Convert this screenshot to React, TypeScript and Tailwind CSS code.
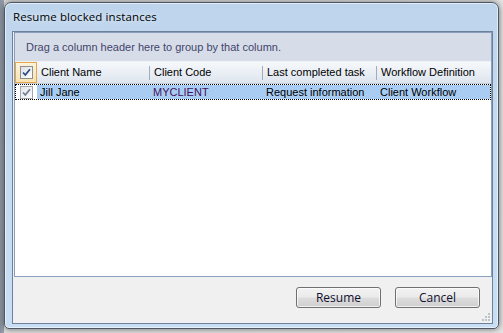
import React from "react";

const ui = { fontFamily: '"Open Sans", "Noto Sans", sans-serif' };
const grid = { fontFamily: '"Liberation Sans", Arial, sans-serif' };

const CheckBox = ({ disabled }: { disabled?: boolean }) => (
  <div
    className={
      "w-[13px] h-[13px] border flex items-center justify-center " +
      (disabled
        ? "border-[#a4a9b0] bg-[linear-gradient(135deg,#e2e4e8,#fbfbfc)]"
        : "border-[#8e8f8f] bg-[linear-gradient(135deg,#dcdfe3,#ffffff)]")
    }
  >
    <svg width="9" height="9" viewBox="0 0 9 9">
      <path
        d="M1 4.5 L3.3 7 L8 1.2"
        fill="none"
        stroke={disabled ? "#6f7d92" : "#2c4a86"}
        strokeWidth="1.7"
      />
    </svg>
  </div>
);

// column widths measured from the screenshot (separator included at the start)
const colW = ["w-[112px]", "w-[113px]", "w-[114px]", "flex-1"];
const columns = ["Client Name", "Client Code", "Last completed task", "Workflow Definition"];
const row = ["Jill Jane", "MYCLIENT", "Request information", "Client Workflow"];

const Button = ({ label }: { label: string }) => (
  <button
    style={ui}
    className="w-[85px] h-[21px] rounded-[3px] border border-[#707070] bg-[linear-gradient(180deg,#f2f2f2_0%,#ebebeb_48%,#dddddd_52%,#cfcfcf_100%)] shadow-[inset_0_0_0_1px_rgba(255,255,255,0.7)] text-[12px] text-[#101030] leading-none"
  >
    {label}
  </button>
);

export default function App() {
  return (
    <div className="w-[503px] h-[333px] overflow-hidden bg-[linear-gradient(90deg,#8993a0_0px,#9aa3ad_4px,#dedede_4px,#e4e4e4_100%)]">
      {/* dialog window */}
      <div className="ml-[4px] mt-[2px] w-[495px] h-[327px] flex flex-col rounded-t-[7px] rounded-b-[5px] border border-[#4e5864] bg-[linear-gradient(180deg,#bdd4ec_0%,#c5dbf2_40%,#c8def4_100%)] shadow-[0_0_6px_rgba(0,0,0,0.55),inset_0_0_0_1px_rgba(255,255,255,0.55)]">
        <div className="h-[28px] pl-[8px] flex items-center">
          <span style={ui} className="text-[11.5px] text-black tracking-[0.1px] [text-shadow:0_0_6px_rgba(255,255,255,0.9)]">
            Resume blocked instances
          </span>
        </div>

        {/* client area */}
        <div className="ml-[7px] mr-[5px] mb-[4px] flex-1 flex flex-col border border-[#6d819b] bg-[#f0f0f0]">
          {/* grid */}
          <div style={grid} className="ml-[1px] h-[245px] flex flex-col border border-[#8aa0bd] bg-white">
            <div className="h-[29px] flex items-center pl-[11px] bg-[#d6dde9] border-b border-[#eef2f7] text-[11px] text-[#44446a]">
              Drag a column header here to group by that column.
            </div>
            {/* header row */}
            <div className="h-[22px] flex bg-[linear-gradient(180deg,#f6f8fb_0%,#eaeff5_50%,#dde4ed_100%)] border-b border-[#c5cfdc]">
              <div className="w-[22px] flex items-center justify-center border border-[#e7a64a] bg-[linear-gradient(180deg,#fdf3dc,#f8e2b0)]">
                <CheckBox />
              </div>
              {columns.map((c, i) => (
                <div key={c} className={colW[i] + " flex items-center"}>
                  {i > 0 && <div className="w-[1px] h-[14px] bg-[#a3acba] mr-[4px]" />}
                  {i === 0 && <div className="w-[4px]" />}
                  <span className="text-[11px] text-black whitespace-nowrap">{c}</span>
                </div>
              ))}
            </div>
            {/* data row */}
            <div className="h-[16px] flex border border-dotted border-black">
              <div className="w-[21px] flex items-center justify-center bg-white">
                <CheckBox disabled />
              </div>
              <div className="flex-1 flex bg-[#a9cdf2]">
                {row.map((c, i) => (
                  <div key={c} className={colW[i] + " flex items-center " + (i === 0 ? "pl-[3px]" : "pl-[4px]")}>
                    <span className={"text-[11px] whitespace-nowrap " + (i === 1 ? "text-[#45115a]" : "text-black")}>
                      {c}
                    </span>
                  </div>
                ))}
              </div>
            </div>
            <div className="flex-1" />
          </div>

          {/* buttons */}
          <div className="mt-[10px] flex justify-end gap-[14px] pr-[12px]">
            <Button label="Resume" />
            <Button label="Cancel" />
          </div>
          <div className="flex-1 flex justify-end items-end pr-[2px] pb-[2px]">
            <svg width="8" height="8" viewBox="0 0 8 8">
              {[
                [6, 0],
                [6, 3],
                [3, 3],
                [6, 6],
                [3, 6],
                [0, 6],
              ].map(([x, y]) => (
                <rect key={x + "-" + y} x={x} y={y} width="2" height="2" fill="#bcc3cc" />
              ))}
            </svg>
          </div>
        </div>
      </div>
    </div>
  );
}
